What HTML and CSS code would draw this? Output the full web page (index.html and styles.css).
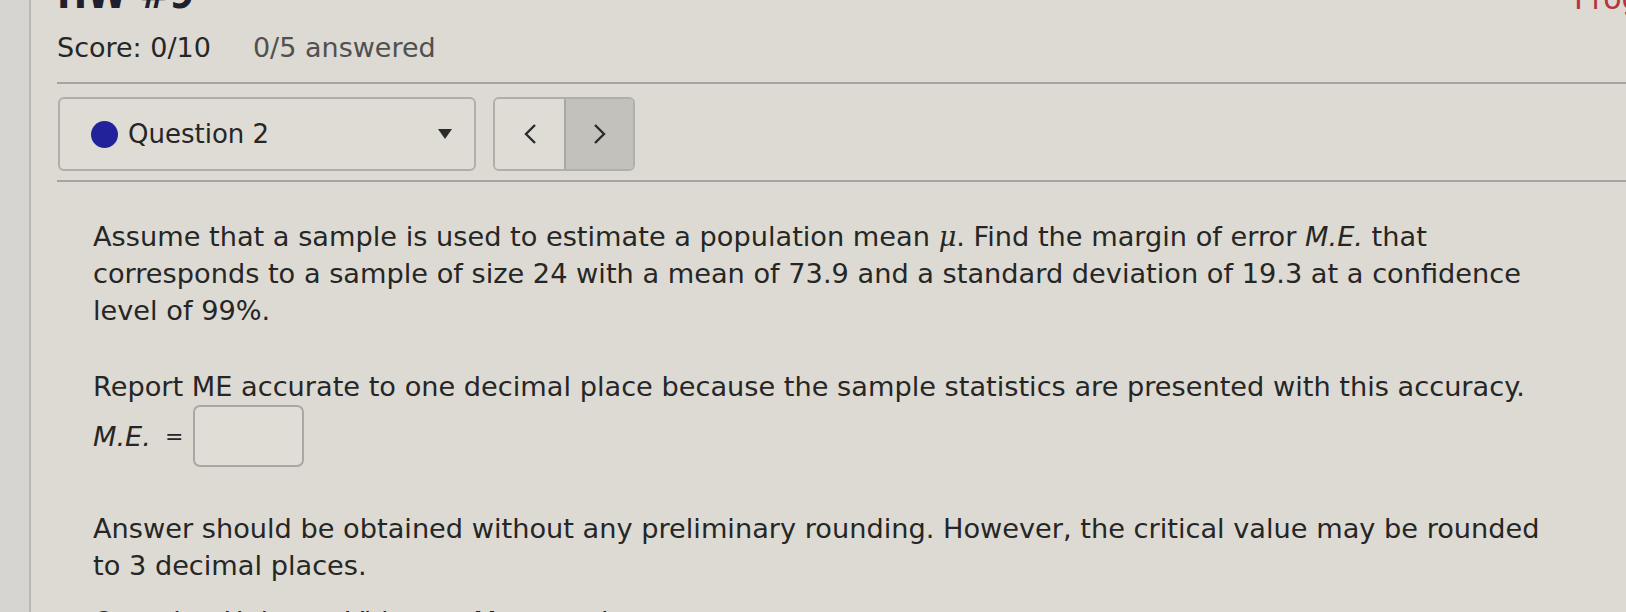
FILE: index.html
```html
<!DOCTYPE html>
<html>
<head>
<meta charset="utf-8">
<link rel="stylesheet" href="styles.css">
</head>
<body>
<div class="side"></div>
<main class="page">
  <div class="titlebar">
    <h1 class="title">HW #9</h1>
    <span class="prog">Progress</span>
  </div>
  <div class="scorebar">
    <span class="score">Score: 0/10</span>
    <span class="answered">0/5 answered</span>
  </div>
  <hr class="rule">
  <div class="toolbar">
    <div class="qselect">
      <span class="dot"></span>
      <span class="qlabel">Question 2</span>
      <span class="caret"></span>
    </div>
    <div class="navgroup">
      <button class="nav prev"><svg width="14" height="22" viewBox="0 0 14 22"><path d="M12 2 L3 11 L12 20" fill="none" stroke="#2b2b2b" stroke-width="2.4"/></svg></button>
      <button class="nav next"><svg width="14" height="22" viewBox="0 0 14 22"><path d="M2 2 L11 11 L2 20" fill="none" stroke="#2b2b2b" stroke-width="2.4"/></svg></button>
    </div>
  </div>
  <hr class="rule">
  <section class="question">
    <p class="p1">Assume that a sample is used to estimate a population mean <i class="mu">μ</i>. Find the margin of error <i>M.E.</i> that corresponds to a sample of size 24 with a mean of 73.9 and a standard deviation of 19.3 at a confidence level of 99%.</p>
    <p class="p2">Report ME accurate to one decimal place because the sample statistics are presented with this accuracy.</p>
    <div class="answer"><i>M.E.</i><span class="eq">=</span><span class="box"></span></div>
    <p class="p3">Answer should be obtained without any preliminary rounding. However, the critical value may be rounded to 3 decimal places.</p>
    <p class="help">Question Help: <span class="vid"></span> Video <span class="msg"></span> Message instructor</p>
  </section>
</main>
</body>
</html>
```
FILE: styles.css
```css
html, body { margin: 0; padding: 0; }
body {
  background: #dcdad2;
  display: flex;
  height: 612px;
  overflow: hidden;
  font-family: "DejaVu Sans", Verdana, sans-serif;
  color: #262626;
}
.side {
  width: 29px;
  flex: none;
  background: #d6d5d2;
  border-right: 2px solid #b9b8b3;
}
.page {
  flex: 1;
  padding-left: 26px;
  margin-top: -27px;
  min-width: 0;
  overflow: hidden;
}
.titlebar {
  display: flex;
  height: 42px;
}
.title {
  margin: 0;
  width: 1517px;
  flex: none;
  font-size: 40px;
  line-height: 42px;
  font-weight: bold;
  color: #1f1f30;
  font-stretch: condensed;
}
.prog {
  flex: none;
  color: #b5333f;
  font-size: 30px;
  line-height: 42px;
  padding-top: 5px;
  white-space: nowrap;
}
.scorebar {
  margin-top: 15px;
  height: 36px;
  line-height: 36px;
  font-size: 27px;
  display: flex;
  gap: 42px;
}
.score { color: #262626; }
.answered { color: #505050; }
.rule {
  margin: 0;
  border: none;
  border-top: 2px solid #a6a49e;
}
.scorebar + .rule { margin-top: 16px; }
.toolbar {
  display: flex;
  gap: 17px;
  margin: 13px 0 9px 1px;
}
.qselect {
  width: 418px;
  height: 74px;
  box-sizing: border-box;
  border: 2px solid #b0aea8;
  border-radius: 6px;
  display: flex;
  align-items: center;
  padding: 0 22px 0 31px;
  background: #dedcd5;
}
.dot {
  width: 27px;
  height: 27px;
  border-radius: 50%;
  background: #22229a;
  flex: none;
}
.qlabel {
  margin-left: 10px;
  font-size: 26px;
  flex: 1;
}
.caret {
  width: 0; height: 0;
  border-left: 7px solid transparent;
  border-right: 7px solid transparent;
  border-top: 10px solid #2b2b2b;
}
.navgroup {
  display: flex;
  height: 74px;
  border: 2px solid #b0aea8;
  border-radius: 6px;
  overflow: hidden;
  box-sizing: border-box;
}
.nav {
  width: 69px;
  border: none;
  padding: 0;
  display: flex;
  align-items: center;
  justify-content: center;
  background: #dedcd5;
}
.nav.next {
  background: #c3c1bb;
  border-left: 2px solid #aaa8a2;
}
.question {
  padding-left: 36px;
  font-size: 27.2px;
  line-height: 37px;
}
.question p { margin: 0; max-width: 1475px; }
.p1 { margin-top: 36px !important; }
.mu { font-family: "DejaVu Serif", serif; font-style: italic; }
.p2 { margin-top: 39px !important; }
.answer {
  display: flex;
  align-items: center;
  height: 62px;
}
.eq { margin-left: 14px; font-size: 22px; }
.box {
  width: 111px;
  height: 62px;
  box-sizing: border-box;
  border: 2px solid #a9a7a1;
  border-radius: 7px;
  margin-left: 10px;
  background: #dfddd6;
}
.p3 { margin-top: 43px !important; }
.help { margin-top: 19px !important; color: #262626; }
.vid, .msg {
  display: inline-block;
  width: 34px;
  height: 24px;
  background: #2c2c2c;
  border-radius: 3px;
  vertical-align: middle;
}
```
